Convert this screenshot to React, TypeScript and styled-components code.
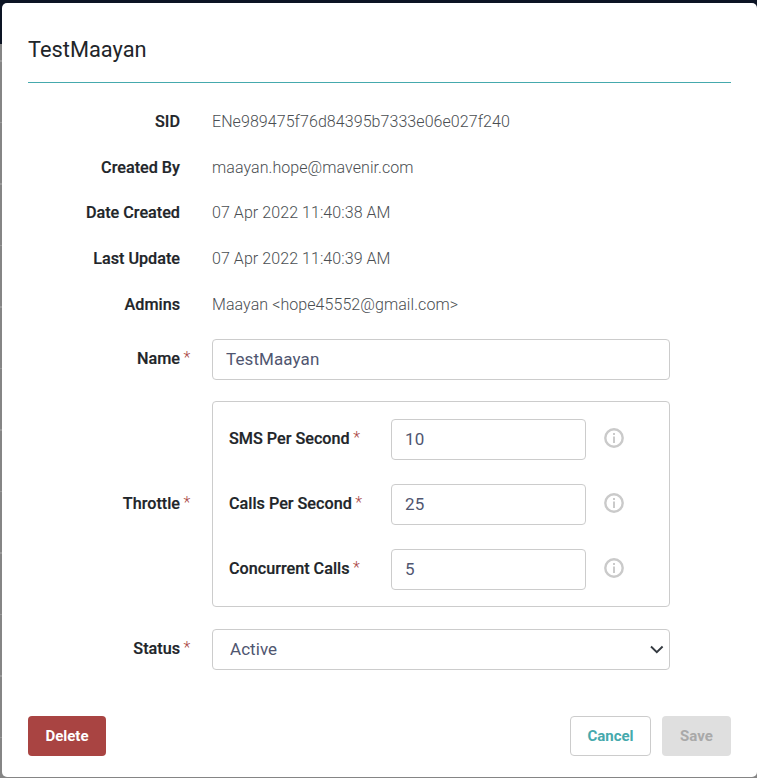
import React from "react";
import styled, { createGlobalStyle } from "styled-components";

const Global = createGlobalStyle`
  html, body { margin: 0; padding: 0; height: 100%; }
  body { font-family: Roboto, "Liberation Sans", sans-serif; overflow: hidden; }
  * { box-sizing: border-box; }
`;

// Page behind the dialog
const Backdrop = styled.div`
  height: 778px;
  padding: 3px 0 1px 2px;
  background:
    linear-gradient(#0c1424 0 44px, transparent 44px),
    repeating-linear-gradient(#858585 0 60px, #9a9a9a 60px 61.5px);
  background-color: #858585;
`;
const Dialog = styled.div`
  height: 774px;
  padding: 0 26px;
  background: #fff;
  border-radius: 5px;
  display: flex;
  flex-direction: column;
`;
const Header = styled.div`
  height: 80px;
  border-bottom: 1px solid #45a9ad;
  display: flex;
  align-items: center;
  padding-top: 13px;
`;
const Title = styled.h2`
  margin: 0;
  font-size: 21.8px;
  font-weight: 400;
  color: #212529;
`;

// Form rows
const Form = styled.div`
  padding-top: 16px;
  flex: 1;
  display: flex;
  flex-direction: column;
`;
const InfoRow = styled.div`
  height: 45.6px;
  display: grid;
  grid-template-columns: 152px 1fr;
  column-gap: 32px;
  align-items: center;
`;
const FieldRow = styled.div<{ $mt?: number }>`
  display: grid;
  grid-template-columns: 152px 458px;
  column-gap: 32px;
  align-items: center;
  margin-top: ${(p) => p.$mt ?? 0}px;
`;
const Label = styled.div`
  text-align: right;
  font-size: 16.2px;
  font-weight: 500;
  color: #212529;
  white-space: nowrap;
  -webkit-text-stroke: 0.2px #212529;
`;
const RequiredLabel = styled(Label)`
  padding-bottom: 2px;
`;
const Value = styled.div`
  font-size: 16px;
  font-weight: 300;
  letter-spacing: 0.07px;
  color: #4a4e52;
`;
const Star = styled.span`
  display: inline-block;
  width: 0;
  margin-left: 3.5px;
  margin-right: -3.5px;
  font-size: 16px;
  font-weight: 300;
  line-height: 1;
  color: #a94442;
  -webkit-text-stroke: 0;
  position: relative;
  top: -1px;
`;
const TextInput = styled.input`
  display: block;
  width: 100%;
  height: 41px;
  padding: 0 13px 2px;
  border: 1px solid #cccccc;
  border-radius: 4px;
  font: 400 17px Roboto, sans-serif;
  letter-spacing: 0.1px;
  color: #505670;
  background: #fff;
  outline: none;
`;
const SelectWrap = styled.div`
  position: relative;
`;
const StatusSelect = styled.select`
  display: block;
  width: 100%;
  height: 41px;
  padding: 0 17px 2px;
  border: 1px solid #cccccc;
  border-radius: 4px;
  font: 400 17px Roboto, sans-serif;
  letter-spacing: 0.05px;
  color: #505670;
  background: #fff;
  appearance: none;
  outline: none;
`;
const Caret = styled.svg`
  position: absolute;
  right: 6px;
  top: 16px;
  pointer-events: none;
`;

// Throttle group
const ThrottleBox = styled.div`
  border: 1px solid #cccccc;
  border-radius: 4px;
  padding: 17px 16px 16px;
  display: flex;
  flex-direction: column;
  gap: 24px;
`;
const ThrottleRow = styled.div`
  display: grid;
  grid-template-columns: 162px 195px 20px;
  align-items: center;
`;
const ThrottleLabel = styled(RequiredLabel)`
  text-align: left;
`;
const InfoIcon = styled.svg`
  margin-left: 18px;
  margin-top: -3px;
  display: block;
`;

// Footer
const Footer = styled.div`
  display: flex;
  align-items: center;
  margin-bottom: 21px;
  height: 40px;
`;
const Spacer = styled.div`
  flex: 1;
`;
const Button = styled.button<{ $kind: "danger" | "outline" | "disabled" }>`
  height: 40px;
  border-radius: 4px;
  font: 700 15px Roboto, sans-serif;
  padding: 0;
  margin-left: ${(p) => (p.$kind === "disabled" ? 11 : 0)}px;
  width: ${(p) => (p.$kind === "danger" ? 78 : p.$kind === "outline" ? 81 : 69)}px;
  border: 1px solid ${(p) => (p.$kind === "outline" ? "#cccccc" : "transparent")};
  background: ${(p) =>
    p.$kind === "danger" ? "#a94442" : p.$kind === "outline" ? "#fff" : "#dfdfdf"};
  color: ${(p) =>
    p.$kind === "danger" ? "#fff" : p.$kind === "outline" ? "#45a9ad" : "#a9a9a9"};
`;

const Info = () => (
  <InfoIcon width="20" height="20" viewBox="0 0 20 20" fill="none">
    <circle cx="10" cy="10" r="8.7" stroke="#cacaca" strokeWidth="2.4" />
    <rect x="9" y="8.5" width="2" height="6.5" fill="#cacaca" />
    <rect x="9" y="5" width="2" height="2" fill="#cacaca" />
  </InfoIcon>
);

const details = [
  ["SID", "ENe989475f76d84395b7333e06e027f240"],
  ["Created By", "maayan.hope@mavenir.com"],
  ["Date Created", "07 Apr 2022 11:40:38 AM"],
  ["Last Update", "07 Apr 2022 11:40:39 AM"],
  ["Admins", "Maayan <hope45552@gmail.com>"],
];

const throttles = [
  ["SMS Per Second", "10"],
  ["Calls Per Second", "25"],
  ["Concurrent Calls", "5"],
];

const App = () => (
  <>
    <Global />
    <Backdrop>
      <Dialog>
        <Header>
          <Title>TestMaayan</Title>
        </Header>
        <Form>
          {details.map(([k, v]) => (
            <InfoRow key={k}>
              <Label>{k}</Label>
              <Value>{v}</Value>
            </InfoRow>
          ))}
          <FieldRow $mt={12.5}>
            <RequiredLabel>
              Name<Star>*</Star>
            </RequiredLabel>
            <TextInput defaultValue="TestMaayan" />
          </FieldRow>
          <FieldRow $mt={21}>
            <RequiredLabel>
              Throttle<Star>*</Star>
            </RequiredLabel>
            <ThrottleBox>
              {throttles.map(([k, v]) => (
                <ThrottleRow key={k}>
                  <ThrottleLabel>
                    {k}
                    <Star>*</Star>
                  </ThrottleLabel>
                  <TextInput defaultValue={v} />
                  <Info />
                </ThrottleRow>
              ))}
            </ThrottleBox>
          </FieldRow>
          <FieldRow $mt={22}>
            <RequiredLabel>
              Status<Star>*</Star>
            </RequiredLabel>
            <SelectWrap>
              <StatusSelect defaultValue="Active">
                <option>Active</option>
                <option>Suspended</option>
              </StatusSelect>
              <Caret width="14" height="10" viewBox="0 0 14 10" fill="none">
                <path d="M1 1.5 6.8 7.2l5.8-5.7" stroke="#343a40" strokeWidth="1.9" />
              </Caret>
            </SelectWrap>
          </FieldRow>
        </Form>
        <Footer>
          <Button $kind="danger">Delete</Button>
          <Spacer />
          <Button $kind="outline">Cancel</Button>
          <Button $kind="disabled">Save</Button>
        </Footer>
      </Dialog>
    </Backdrop>
  </>
);

export default App;
